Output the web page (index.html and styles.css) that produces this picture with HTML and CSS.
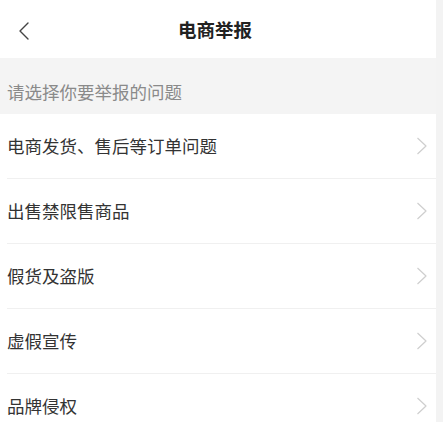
FILE: index.html
```html
<!DOCTYPE html>
<html lang="zh-CN">
<head>
<meta charset="utf-8">
<link rel="stylesheet" href="styles.css">
</head>
<body>
<div class="page">
  <main class="main">
    <header class="header">
      <span class="back">
        <svg width="14" height="18" viewBox="0 0 14 18"><path d="M11 1 L3 9 L11 17" fill="none" stroke="#444" stroke-width="1.4" stroke-linecap="round" stroke-linejoin="round"/></svg>
      </span>
      <h1 class="title">电商举报</h1>
    </header>
    <div class="hint">请选择你要举报的问题</div>
    <ul class="list">
      <li class="item"><span class="label">电商发货、售后等订单问题</span><svg class="chev" width="12" height="18" viewBox="0 0 12 18"><path d="M1.5 1 L10 9 L1.5 17" fill="none" stroke="#cfcfcf" stroke-width="1.2" stroke-linejoin="round"/></svg></li>
      <li class="item"><span class="label">出售禁限售商品</span><svg class="chev" width="12" height="18" viewBox="0 0 12 18"><path d="M1.5 1 L10 9 L1.5 17" fill="none" stroke="#cfcfcf" stroke-width="1.2" stroke-linejoin="round"/></svg></li>
      <li class="item"><span class="label">假货及盗版</span><svg class="chev" width="12" height="18" viewBox="0 0 12 18"><path d="M1.5 1 L10 9 L1.5 17" fill="none" stroke="#cfcfcf" stroke-width="1.2" stroke-linejoin="round"/></svg></li>
      <li class="item"><span class="label">虚假宣传</span><svg class="chev" width="12" height="18" viewBox="0 0 12 18"><path d="M1.5 1 L10 9 L1.5 17" fill="none" stroke="#cfcfcf" stroke-width="1.2" stroke-linejoin="round"/></svg></li>
      <li class="item"><span class="label">品牌侵权</span><svg class="chev" width="12" height="18" viewBox="0 0 12 18"><path d="M1.5 1 L10 9 L1.5 17" fill="none" stroke="#cfcfcf" stroke-width="1.2" stroke-linejoin="round"/></svg></li>
    </ul>
  </main>
  <div class="strip"></div>
</div>
</body>
</html>
```

FILE: styles.css
```css
html, body {
  margin: 0;
  padding: 0;
  background: #ffffff;
}
body {
  font-family: "Noto Sans CJK SC", "Noto Sans", sans-serif;
  overflow: hidden;
}
.page {
  display: flex;
  width: 443px;
  height: 422px;
  overflow: hidden;
}
.main {
  width: 436px;
  flex: none;
  background: #ffffff;
}
.strip {
  flex: 1;
  background: #f3f3f3;
}
.header {
  height: 58px;
  display: flex;
  align-items: center;
  justify-content: center;
  position: relative;
}
.back {
  position: absolute;
  left: 17px;
  top: 22px;
  display: flex;
}
.title {
  margin: 0 6px 0 0;
  font-size: 18.5px;
  font-weight: 700;
  color: #222222;
  line-height: 1;
}
.hint {
  height: 56px;
  box-sizing: border-box;
  background: #f4f4f4;
  color: #8a8a8a;
  font-size: 17.5px;
  line-height: 20px;
  padding: 24px 0 0 7px;
}
.list {
  list-style: none;
  margin: 0;
  padding: 0;
}
.item {
  height: 65px;
  box-sizing: border-box;
  margin-left: 7px;
  border-bottom: 1px solid #f0f0f0;
  display: flex;
  align-items: center;
  justify-content: space-between;
  padding-right: 8px;
}
.label {
  font-size: 17.5px;
  color: #333333;
  line-height: 20px;
}
.chev {
  display: block;
}
```
